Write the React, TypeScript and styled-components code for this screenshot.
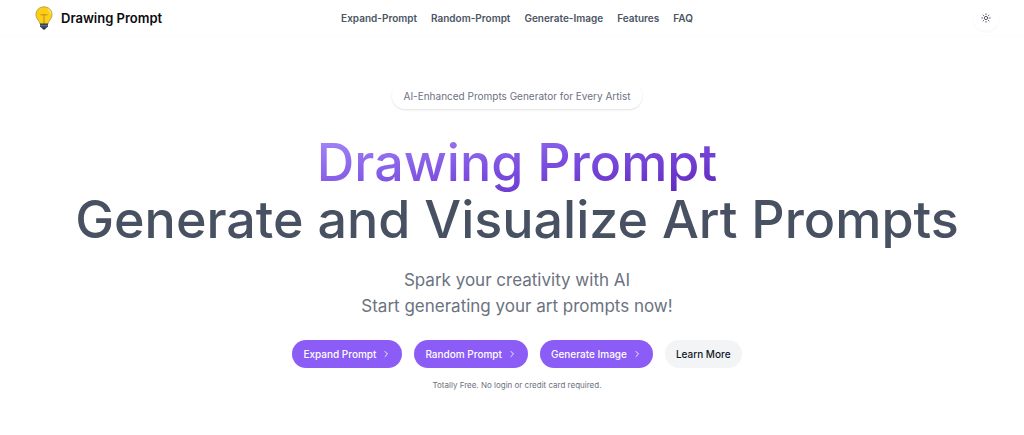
import React from "react";
import styled, { createGlobalStyle } from "styled-components";

const GlobalStyle = createGlobalStyle`
  * { box-sizing: border-box; }
  body {
    margin: 0;
    background: #ffffff;
    color: #4b5563;
    font-family: Inter, "Liberation Sans", sans-serif;
  }
`;

const Header = styled.header`
  display: grid;
  grid-template-columns: 1fr auto 1fr;
  align-items: center;
  height: 36px;
  padding: 0 25px 0 35px;
  border-bottom: 1px solid #fcfcfd;
`;

const Brand = styled.a`
  display: flex;
  align-items: center;
  gap: 8px;
  justify-self: start;
  color: #0b0b10;
  font-size: 13px;
  font-weight: 600;
  line-height: 24px;
  text-decoration: none;
`;

const Nav = styled.nav`
  display: flex;
  gap: 14px;
`;

const NavLink = styled.a`
  color: #4b5563;
  font-size: 10px;
  font-weight: 600;
  line-height: 16px;
  text-decoration: none;
`;

const ThemeButton = styled.button`
  display: flex;
  align-items: center;
  justify-content: center;
  justify-self: end;
  width: 26px;
  height: 26px;
  padding: 0;
  border: 0;
  border-radius: 50%;
  background: #ffffff;
  box-shadow: 0 1px 2px rgba(0, 0, 0, 0.04);
  color: #374151;
`;

const Hero = styled.main`
  display: flex;
  flex-direction: column;
  align-items: center;
  padding: 47px 25px 40px 35px;
  text-align: center;
`;

const Badge = styled.div`
  padding: 5px 12px;
  border-radius: 14px;
  box-shadow: 0 1px 2px rgba(0, 0, 0, 0.12);
  color: #6b7280;
  font-size: 10px;
  line-height: 16px;
`;

const Title = styled.h1`
  margin: 25px 0 0;
  color: #475161;
  font-size: 52px;
  font-weight: 500;
  line-height: 57px;
`;

const Accent = styled.span`
  display: table;
  margin: 0 auto -8px;
  padding-bottom: 8px;
  background: linear-gradient(to bottom right, #a78bfa, #7c4fe0 50%, #5b21b6);
  background-clip: text;
  -webkit-background-clip: text;
  color: transparent;
`;

const Lead = styled.p`
  margin: 19px 0 0;
  color: #6b7280;
  font-size: 17px;
  line-height: 26px;
`;

const Actions = styled.div`
  display: flex;
  flex-wrap: wrap;
  justify-content: center;
  gap: 12px;
  margin-top: 21px;
`;

const Action = styled.button<{ $quiet?: boolean }>`
  display: flex;
  align-items: center;
  gap: 5px;
  height: 28px;
  padding: 0 11px;
  border: 0;
  border-radius: 14px;
  background: ${(p) => (p.$quiet ? "#f3f4f6" : "#8b5cf6")};
  color: ${(p) => (p.$quiet ? "#111827" : "#ffffff")};
  font-family: inherit;
  font-size: 10px;
  font-weight: 500;
  line-height: 16px;
`;

const Note = styled.p`
  margin: 11px 0 0;
  color: #6b7280;
  font-size: 8px;
  line-height: 12px;
`;

const Bulb = () => (
  <svg width="18" height="24" viewBox="0 0 18 24" aria-hidden="true">
    <path d="M9 .8C4.400.8.900 4.200.900 8.600c0 3.200 1.900 4.900 3.100 6.800.6.900.8 1.800 1 2.600h8c.2-.8.4-1.700 1-2.600 1.200-1.900 3.100-3.600 3.100-6.800C17.100 4.200 13.600.8 9 .8Z" fill="#fccf16" stroke="#8f8040" strokeWidth=".6" />
    <path d="M13 3.200c1.900 1.200 2.800 3 2.700 5.300" fill="none" stroke="#ffe36a" strokeWidth="1.200" />
    <path d="M5.500 8.800h7M9 8.800V18" fill="none" stroke="#b58316" strokeWidth=".9" />
    <path d="M5 17.500h8v2.800l-1.500 1.800H6.500L5 20.300Z" fill="#34465c" />
    <path d="M5 19.700h8" stroke="#8795a6" strokeWidth=".6" />
    <path d="M7 22h4l-1 1.500H8Z" fill="#1c2836" />
  </svg>
);

const Sun = () => (
  <svg width="10" height="10" viewBox="0 0 24 24" fill="none" stroke="currentColor" strokeWidth="2" strokeLinecap="round" aria-hidden="true">
    <circle cx="12" cy="12" r="4" />
    <path d="M12 2v2M12 20v2M2 12h2M20 12h2M4.900 4.900l1.400 1.400M17.700 17.700l1.400 1.400M4.900 19.100l1.400-1.400M17.700 6.300l1.400-1.400" />
  </svg>
);

const Chevron = () => (
  <svg width="10" height="10" viewBox="0 0 10 10" fill="none" stroke="currentColor" strokeWidth=".9" strokeLinecap="round" strokeLinejoin="round" aria-hidden="true">
    <path d="m4 2.500 2.500 2.500L4 7.500" />
  </svg>
);

const links = ["Expand-Prompt", "Random-Prompt", "Generate-Image", "Features", "FAQ"];
const actions = ["Expand Prompt", "Random Prompt", "Generate Image"];

export default function App() {
  return (
    <>
      <GlobalStyle />
      <Header>
        <Brand href="#">
          <Bulb />
          Drawing Prompt
        </Brand>
        <Nav>
          {links.map((label) => (
            <NavLink key={label} href={`#${label.toLowerCase()}`}>{label}</NavLink>
          ))}
        </Nav>
        <ThemeButton type="button" aria-label="Toggle theme">
          <Sun />
        </ThemeButton>
      </Header>
      <Hero>
        <Badge>AI-Enhanced Prompts Generator for Every Artist</Badge>
        <Title>
          <Accent>Drawing Prompt</Accent>
          Generate and Visualize Art Prompts
        </Title>
        <Lead>
          Spark your creativity with AI
          <br />
          Start generating your art prompts now!
        </Lead>
        <Actions>
          {actions.map((label) => (
            <Action key={label} type="button">
              {label}
              <Chevron />
            </Action>
          ))}
          <Action type="button" $quiet>Learn More</Action>
        </Actions>
        <Note>Totally Free. No login or credit card required.</Note>
      </Hero>
    </>
  );
}
